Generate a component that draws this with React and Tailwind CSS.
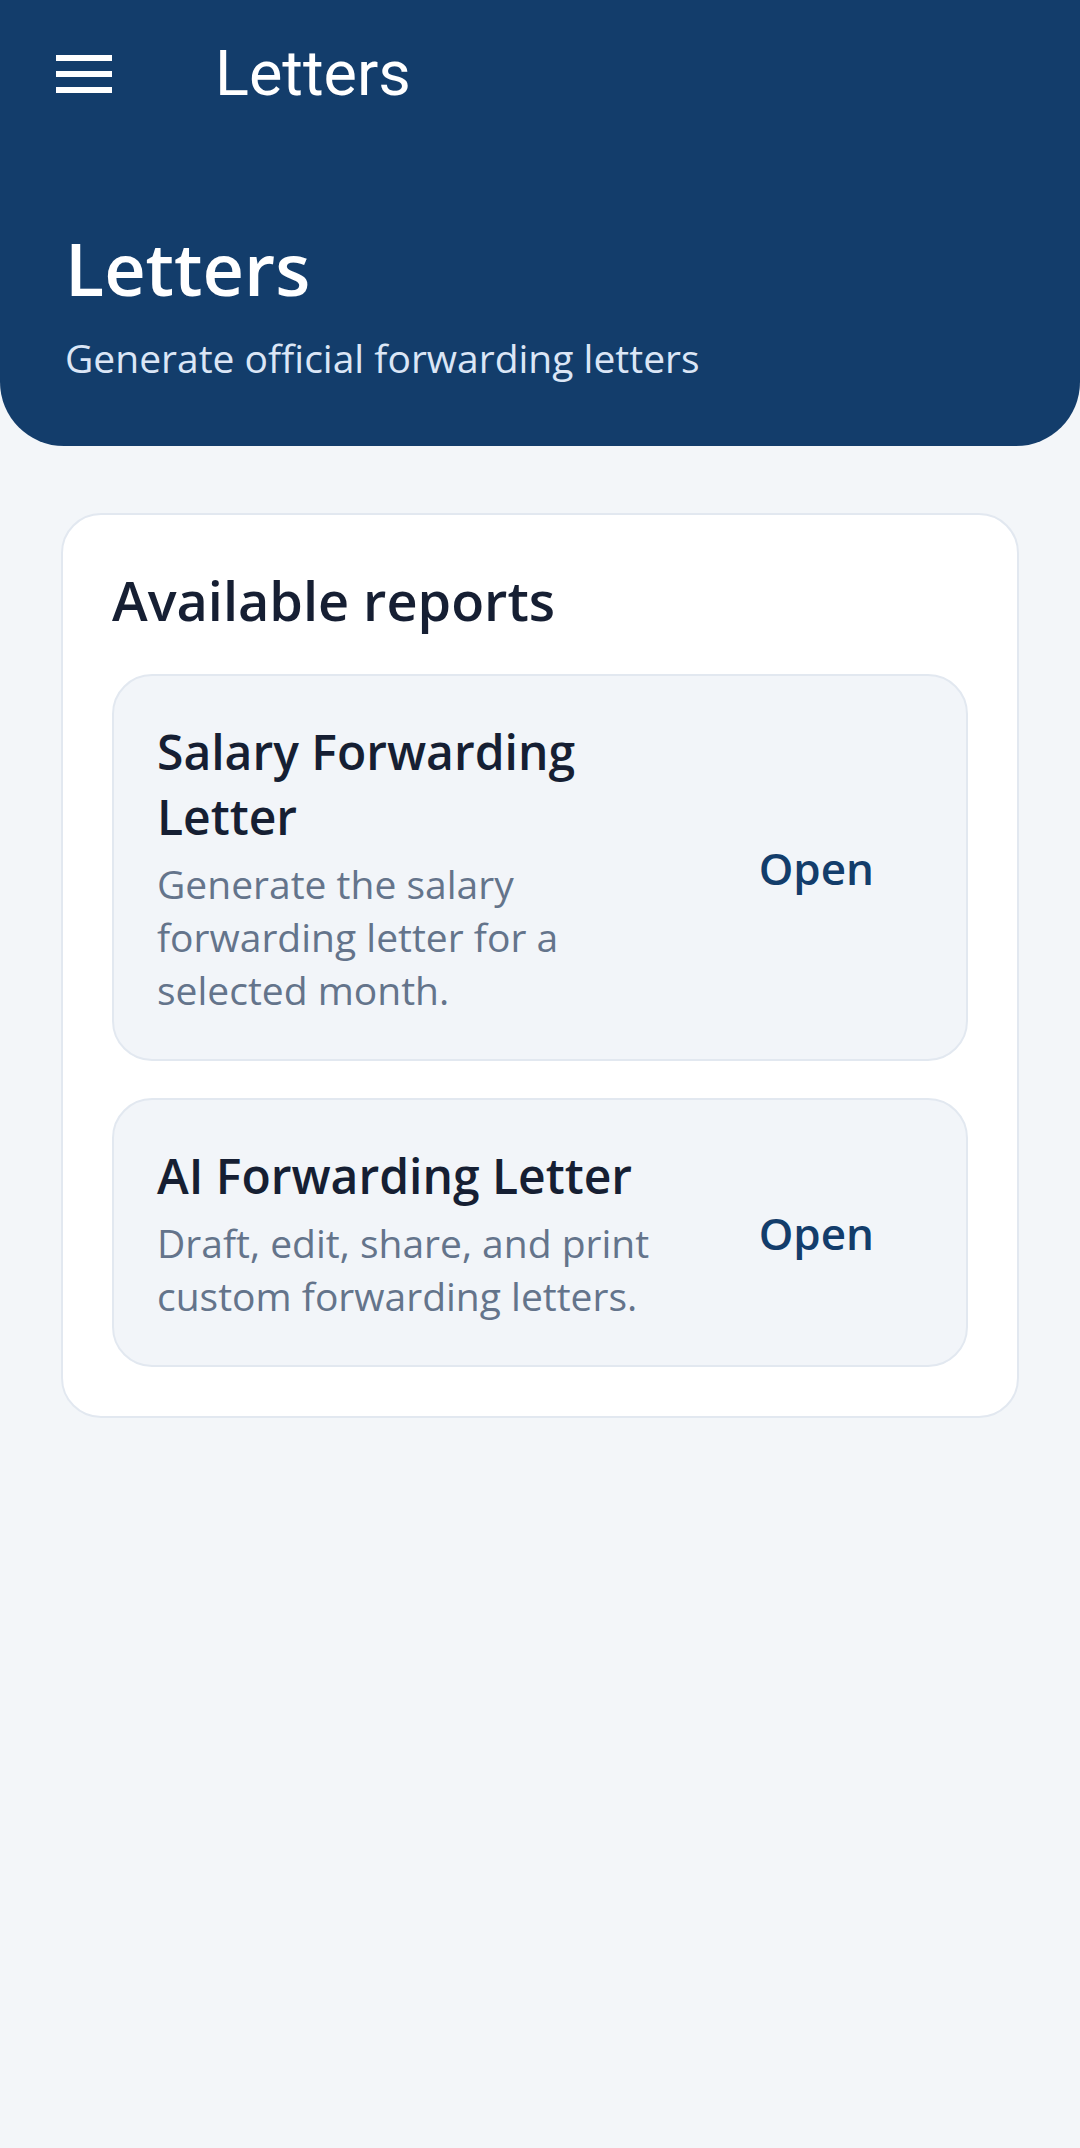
import React from 'react';

const reports = [
  {
    id: 'salary',
    title: 'Salary Forwarding Letter',
    description: 'Generate the salary forwarding letter for a selected month.',
  },
  {
    id: 'ai',
    title: 'AI Forwarding Letter',
    description: 'Draft, edit, share, and print custom forwarding letters.',
  },
];

function MenuIcon() {
  return (
    <div className="w-[56px] h-[38px] flex flex-col justify-between">
      <span className="block h-[6px] w-full bg-white" />
      <span className="block h-[6px] w-full bg-white" />
      <span className="block h-[6px] w-full bg-white" />
    </div>
  );
}

function ReportRow({ report }) {
  return (
    <div className="flex items-center gap-[24px] bg-[#f2f5f9] border-2 border-[#e2e8f0] rounded-[40px] pl-[43px] pr-[44px] py-[43px]">
      <div className="w-[510px] flex flex-col gap-[8px]">
        <h3 className="text-[48px] leading-[65px] font-semibold text-[#161f33]">{report.title}</h3>
        <p className="text-[39px] leading-[53px] text-[#64748b]">{report.description}</p>
      </div>
      <button className="ml-auto px-[48px] py-[12px] text-[44px] leading-[60px] font-semibold text-[#133d6b]">
        Open
      </button>
    </div>
  );
}

export default function App() {
  return (
    <div className="min-h-screen bg-[#f3f6f9] font-['Open_Sans',sans-serif]">
      <header className="bg-[#133d6b] rounded-b-[64px] pb-[62px]">
        <div className="h-[147px] flex items-center pl-[56px]">
          <MenuIcon />
          <span className="ml-[103px] font-['Roboto',sans-serif] font-normal text-[63px] text-white leading-none">
            Letters
          </span>
        </div>
        <div className="px-[65px] pt-[77px]">
          <h1 className="text-[72px] leading-[88px] font-semibold text-white">Letters</h1>
          <p className="mt-[20px] text-[39px] leading-[52px] text-[#dbe6f6]">Generate official forwarding letters</p>
        </div>
      </header>

      <main className="px-[61px] pt-[67px]">
        <section className="bg-white border-2 border-[#e2e8f0] rounded-[40px] p-[49px]">
          <h2 className="text-[54px] leading-[73px] font-semibold text-[#161f33] mb-[37px]">Available reports</h2>
          <div className="flex flex-col gap-[37px]">
            {reports.map(r => (
              <ReportRow key={r.id} report={r} />
            ))}
          </div>
        </section>
      </main>
    </div>
  );
}
